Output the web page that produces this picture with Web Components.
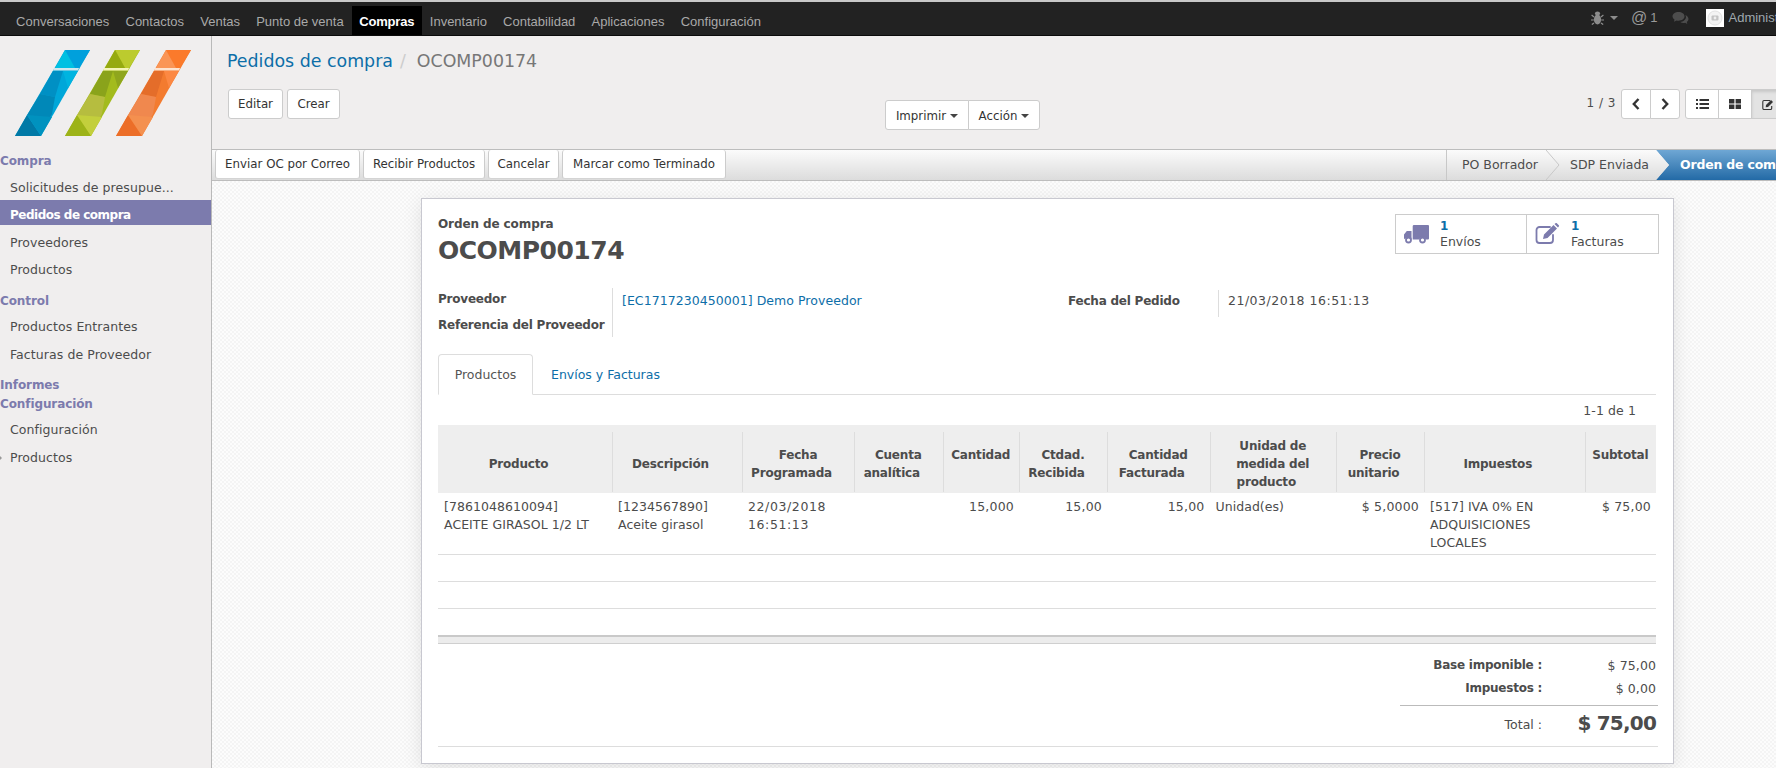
<!DOCTYPE html>
<html lang="es">
<head>
<meta charset="utf-8">
<title>Pedidos de compra</title>
<style>
html,body{margin:0;padding:0;height:768px;overflow:hidden;background:#fff}
body{font-family:"DejaVu Sans","Liberation Sans",sans-serif;font-size:12px;color:#4c4c4c}
</style>
</head>
<body>
<erp-app>
  <erp-topbar slot="top">
    <nav-link>Conversaciones</nav-link><nav-link>Contactos</nav-link><nav-link>Ventas</nav-link><nav-link>Punto de venta</nav-link><nav-link active>Compras</nav-link><nav-link>Inventario</nav-link><nav-link>Contabilidad</nav-link><nav-link>Aplicaciones</nav-link><nav-link>Configuración</nav-link>
  </erp-topbar>
  <erp-sidebar slot="side">
    <side-head style="margin-top:0">Compra</side-head>
    <side-item style="margin-top:7px">Solicitudes de presupue...</side-item>
    <side-item active style="margin-top:2px">Pedidos de compra</side-item>
    <side-item style="margin-top:8px">Proveedores</side-item>
    <side-item style="margin-top:7px">Productos</side-item>
    <side-head style="margin-top:11px">Control</side-head>
    <side-item style="margin-top:6px">Productos Entrantes</side-item>
    <side-item style="margin-top:8px">Facturas de Proveedor</side-item>
    <side-head style="margin-top:10px">Informes</side-head>
    <side-head style="margin-top:-1px">Configuración</side-head>
    <side-item style="margin-top:6px">Configuración</side-item>
    <side-item marker style="margin-top:8px">Productos</side-item>
  </erp-sidebar>
  <control-panel slot="panel"></control-panel>
  <status-bar slot="status"></status-bar>
  <sheet-area slot="main">
    <po-sheet></po-sheet>
  </sheet-area>
</erp-app>

<script>
function def(name, html, init){
  customElements.define(name, class extends HTMLElement{
    constructor(){
      super();
      const r = this.attachShadow({mode:'open'});
      r.innerHTML = html;
      if(init) init(r,this);
    }
  });
}

def('erp-app', `<style>
:host{display:grid;grid-template-columns:212px 1fr;grid-template-rows:36px 113px 32px 587px;width:1776px;height:768px;overflow:hidden}
.t{grid-column:1/3;grid-row:1}
.s{grid-column:1;grid-row:2/5;min-height:0}
.p{grid-column:2;grid-row:2;min-width:0}
.b{grid-column:2;grid-row:3;min-width:0}
.m{grid-column:2;grid-row:4;min-width:0;min-height:0}
</style>
<div class="t"><slot name="top"></slot></div>
<div class="s"><slot name="side"></slot></div>
<div class="p"><slot name="panel"></slot></div>
<div class="b"><slot name="status"></slot></div>
<div class="m"><slot name="main"></slot></div>`);

def('nav-link', `<style>
:host{display:block;flex:none;font:13px/31px "Liberation Sans",Arial,sans-serif;color:#a9a9a9;padding:0 8.1px;height:31px}
:host([active]){background:#000;color:#fff;font-weight:700;padding:0 7.5px;letter-spacing:-.2px}
</style><slot></slot>`);

def('erp-topbar', `<style>
:host{display:flex;height:36px;box-sizing:border-box;background:#222;border-top:2px solid #c9c9c9;border-bottom:1px solid #0b0b0b;overflow:hidden;padding-left:8px;font-family:"Liberation Sans",Arial,sans-serif}
.l{display:flex;align-items:flex-start;padding-top:3.5px;height:31px}
.r{margin-left:auto;display:flex;align-items:center;color:#8c8c8c;font-size:13.5px;width:185px;flex:none;height:33px;margin-top:-1px}
.r svg{flex:none}
.car{width:0;height:0;border:4px solid transparent;border-top-color:#8c8c8c;border-bottom:0;margin:1px 0 0 6px}
.at{font-size:16px;margin-left:13px;color:#999}
.one{margin-left:3px;font-size:13px;color:#999}
.av{width:18px;height:18px;background:#fff;margin-left:17px;flex:none;display:flex;align-items:center;justify-content:center}
.nm{margin-left:4px;color:#9fa8ae;font-size:13px;white-space:nowrap}
</style>
<div class="l"><slot></slot></div>
<div class="r">
<svg width="13" height="14" viewBox="0 0 13 14"><g fill="#8c8c8c"><ellipse cx="6.5" cy="8.5" rx="3.6" ry="5"/><ellipse cx="6.5" cy="2.6" rx="2.6" ry="2"/></g><g stroke="#8c8c8c" stroke-width="1.2" fill="none"><path d="M3 6L.6 4M10 6l2.4-2M2.8 9H0M10.2 9H13M3 12l-2.2 1.6M10 12l2.2 1.6"/></g></svg>
<span class="car"></span>
<span class="at">@</span><span class="one">1</span>
<svg width="17" height="14" viewBox="0 0 17 14" style="margin-left:15px"><path fill="#4d4d4d" d="M6.5 1C3 1 .5 3 .5 5.3c0 1.300.8 2.500 2 3.300L2 10.800l2.600-1.300c.6.100 1.300.200 1.900.200 3.400 0 6-1.900 6-4.400S9.900 1 6.500 1z"/><path fill="#4d4d4d" d="M13.400 4.200c.4.600.6 1.200.6 1.900 0 2.600-2.500 4.600-5.700 5 .9.600 2 .9 3.200.9.600 0 1.100-.1 1.700-.2l2.100 1.200-.5-2c1-.7 1.700-1.700 1.700-2.900 0-1.600-1-3-2.600-3.900z"/></svg>
<span class="av"><svg width="16" height="16" viewBox="0 0 16 16"><circle cx="8" cy="8" r="7" fill="#f3f3f3" stroke="#e2e2e2"/><rect x="4.500" y="5.500" width="7" height="5" rx="1" fill="#c4c4c4"/><circle cx="8" cy="8" r="1.400" fill="#eee"/></svg></span>
<span class="nm">Administrator</span>
</div>`);

function stripe(ox, c){
  return `<g transform="translate(${ox} 50)">
  <polygon points="0,86 26,86 75,0 50,0" fill="${c.base}"/>
  <polygon points="50,0 75,0 64,18 60,18" fill="${c.tr}"/>
  <polygon points="50,0 60,18 40,18" fill="${c.tl}"/>
  <polygon points="38,21 63,21 53,38 48,21" fill="${c.ur}"/>
  <polygon points="38,21 48,21 40,47 25,44" fill="${c.ul}"/>
  <polygon points="25,44 40,47 37,64 30,76 12,65" fill="${c.mid}"/>
  <polygon points="0,86 12,65 26,86" fill="${c.bot}"/>
  <polygon points="12,65 26,86 37,67" fill="${c.mid2}"/>
  <polygon points="39,18 64,18 63,20.500 38,20.500" fill="${c.band}"/>
  </g>`;
}
const LOGO = `<svg width="200" height="115" viewBox="0 36 200 115" style="display:block">`+
 stripe(15,{base:'#00a7d9',tr:'#00a0dc',tl:'#00c0e2',ur:'#00b4e0',ul:'#0090c4',mid:'#0088b8',mid2:'#0092bf',bot:'#0079a6',band:'#cfe6ec'})+
 stripe(65,{base:'#a3bb1d',tr:'#bccb2e',tl:'#96aa10',ur:'#8fa61d',ul:'#8aa31b',mid:'#b6bd3f',mid2:'#c3cf3c',bot:'#9db318',band:'#f4f4b8'})+
 stripe(116,{base:'#f37b2f',tr:'#fb7a2b',tl:'#fa9556',ur:'#fc8843',ul:'#e46d2a',mid:'#f0884e',mid2:'#f4904f',bot:'#ec6e28',band:'#fde3cf'})+
 `</svg>`;

def('erp-sidebar', `<style>
:host{display:block;width:212px;height:732px;box-sizing:border-box;background:#f0eeee;border-right:1px solid #b9b9b9;overflow:hidden}
.logo{height:115px}
</style><div class="logo">${LOGO}</div><slot></slot>`);

def('side-head', `<style>
:host{display:block;height:20px;line-height:20px;font-weight:700;font-size:12px;color:#7c7bad;letter-spacing:-.1px;white-space:nowrap}
</style><slot></slot>`);

def('side-item', `<style>
:host{display:block;height:20px;line-height:20px;padding-left:10px;color:#4c4c4c;font-size:12.500px;letter-spacing:.08px;white-space:nowrap;position:relative}
:host([active]){background:#7c7bad;color:#fff;font-weight:700;font-size:12px;padding-top:5px;letter-spacing:-.5px}
:host([marker])::before{content:"";position:absolute;left:0;top:8px;width:0;height:0;border:2px solid transparent;border-left:2px solid #999}
</style><slot></slot>`);

def('erp-btn', `<style>
:host{display:inline-flex;align-items:center;justify-content:center;box-sizing:border-box;height:var(--h,30px);padding:var(--pt,0) var(--px,10px) 0;background:#fff;border:1px solid #ccc;border-radius:var(--r,3px);color:#333;font-size:11.800px;white-space:nowrap;flex:none}
:host([on]){background:#e3e3e3;box-shadow:inset 0 2px 3px rgba(0,0,0,.12)}
</style><slot></slot>`);

def('caret-mark', `<style>:host{display:inline-block;width:0;height:0;border:4px solid transparent;border-top-color:#444;border-bottom:0;margin-left:4px;vertical-align:middle}</style>`);

def('control-panel', `<style>
:host{display:block;height:113px;box-sizing:border-box;background:#f0eeee;padding:15px 0 0 16px;overflow:hidden}
.bc{font-size:17.400px;line-height:21px;height:21px;white-space:nowrap;margin-left:-1px}
.bc a{color:#0d6ea8}
.bc i{font-style:normal;color:#ccc;margin:0 11px 0 7px}
.bc b{font-weight:400;color:#777}
.row{display:grid;grid-template-columns:657px auto 1fr;margin-top:17px;align-items:start}
.lb{display:flex;gap:4px}
.grp{display:flex;margin-top:11px}
.grp erp-btn{--h:30px;--pt:2px}
.grp erp-btn:first-child{--r:3px 0 0 3px;width:84px;--px:0px}
.grp erp-btn:last-child{--r:0 3px 3px 0;margin-left:-1px;width:72px;--px:0px}
.rb{display:flex;justify-content:flex-end;align-items:flex-start;margin-right:-9px}
.pg{margin:7px 5px 0 0;font-size:12px;letter-spacing:.5px;color:#4c4c4c;white-space:nowrap}
.sq{display:flex}
.sq erp-btn{--px:0px;width:30px;--r:0}
.sq.a erp-btn:first-child{--r:3px 0 0 3px}
.sq.a erp-btn:last-child{--r:0 3px 3px 0;margin-left:-1px}
.sq.b{margin-left:5px}
.sq.b erp-btn{width:34px;margin-left:-1px}
.sq.b erp-btn:first-child{--r:3px 0 0 3px;margin-left:0}
</style>
<div class="bc"><a>Pedidos de compra</a><i>/</i><b>OCOMP00174</b></div>
<div class="row">
  <div class="lb"><erp-btn style="--px:0px;width:55px">Editar</erp-btn><erp-btn style="--px:0px;width:53px">Crear</erp-btn></div>
  <div class="grp"><erp-btn>Imprimir<caret-mark></caret-mark></erp-btn><erp-btn>Acción<caret-mark></caret-mark></erp-btn></div>
  <div class="rb">
    <span class="pg">1 / 3</span>
    <div class="sq a">
      <erp-btn><svg width="8" height="12" viewBox="0 0 8 12"><path d="M6.500 1L1.800 6l4.700 5" fill="none" stroke="#333" stroke-width="2.400"/></svg></erp-btn>
      <erp-btn><svg width="8" height="12" viewBox="0 0 8 12"><path d="M1.500 1l4.700 5-4.700 5" fill="none" stroke="#333" stroke-width="2.400"/></svg></erp-btn>
    </div>
    <div class="sq b">
      <erp-btn><svg width="13" height="10" viewBox="0 0 13 10"><path fill="#333" d="M0 0h2v2H0zM3.500 0H13v2H3.500zM0 4h2v2H0zM3.500 4H13v2H3.500zM0 8h2v2H0zM3.500 8H13v2H3.500z"/></svg></erp-btn>
      <erp-btn><svg width="12" height="10" viewBox="0 0 12 10"><path fill="#333" d="M0 0h5.400v4.400H0zM6.600 0H12v4.400H6.600zM0 5.600h5.400V10H0zM6.600 5.600H12V10H6.600z"/></svg></erp-btn>
      <erp-btn on><svg width="12" height="11" viewBox="0 0 12 11"><path d="M8 1.500H2A1.300 1.300 0 0 0 .8 2.800v6.400A1.300 1.300 0 0 0 2 10.500h6.400a1.300 1.300 0 0 0 1.300-1.300V7" fill="none" stroke="#333" stroke-width="1.100"/><path fill="#333" d="M4 6l5-5 2 2-5 5-2.300.3z"/></svg></erp-btn>
    </div>
  </div>
</div>`);

def('status-bar', `<style>
:host{display:flex;height:32px;box-sizing:border-box;border-top:1px solid #bdbdbd;border-bottom:1px solid #bdbdbd;background:linear-gradient(#fbfbfb,#dcdcdc);padding-left:3px;overflow:hidden;align-items:flex-start}
.acts{display:flex;gap:3px}
.acts erp-btn{--h:29px;--px:0px;border-top:0;border-bottom:1px solid #d4d4d4}
.steps{margin-left:auto;display:flex;height:30px;width:330px;flex:none}
.st{position:relative;box-sizing:border-box;height:30px;line-height:30px;font-size:12.500px;color:#4c4c4c;white-space:nowrap}
.st:first-child{border-left:1px solid #c8c8c8}
.a{position:absolute;top:0;right:-14px;width:14px;height:30px;z-index:2}
.on{background:linear-gradient(#6fa7d4,#236aa6);color:#fff;font-weight:700;overflow:hidden;letter-spacing:-.2px}
</style>
<div class="acts">
<erp-btn style="width:145px">Enviar OC por Correo</erp-btn>
<erp-btn style="width:122px">Recibir Productos</erp-btn>
<erp-btn style="width:71px">Cancelar</erp-btn>
<erp-btn style="width:164px">Marcar como Terminado</erp-btn>
</div>
<div class="steps">
 <div class="st" style="width:100px;padding-left:15px">PO Borrador<svg class="a" viewBox="0 0 14 30"><defs><linearGradient id="g1" x1="0" x2="0" y1="0" y2="1"><stop offset="0" stop-color="#fbfbfb"/><stop offset="1" stop-color="#dcdcdc"/></linearGradient></defs><path d="M0 0L13 15 0 30z" fill="url(#g1)"/><path d="M0 0L13 15 0 30" fill="none" stroke="#c8c8c8"/></svg></div>
 <div class="st" style="width:110px;padding-left:24px">SDP Enviada<svg class="a" viewBox="0 0 14 30"><path d="M0 0L13 15 0 30z" fill="url(#g1)"/></svg></div>
 <div class="st on" style="width:120px;padding-left:24px">Orden de compra<svg style="position:absolute;left:0;top:0" width="14" height="30" viewBox="0 0 14 30"><path d="M0 0L13 15 0 30z" fill="url(#g1)"/></svg></div>
</div>`);

def('sheet-area', `<style>
:host{display:block;height:587px;box-sizing:border-box;padding:17px 0 0 209px;overflow:hidden;background:repeating-conic-gradient(#f4f4f4 0 25%,#fcfcfc 0 50%) 0 0/4px 4px}
</style><slot></slot>`);

def('stat-btn', `<style>
:host{display:flex;width:130px;box-sizing:border-box;height:38px;align-items:center;color:#4c4c4c;font-size:12.500px}
.i{width:44px;flex:none;padding-left:8px;box-sizing:border-box;display:flex}
.t{line-height:16px}
.n{color:#0d6ea8;font-weight:700;font-size:12px;display:block}
</style><div class="i"><slot name="icon"></slot></div><div class="t"><span class="n"><slot name="n"></slot></span><slot></slot></div>`);

def('po-lines', `<style>
:host{display:block}
table{border-collapse:separate;border-spacing:0;table-layout:fixed;width:1218px;font-size:12.500px}
th{height:68px;padding:9px 3px 0;box-sizing:border-box;background:linear-gradient(#ddd,#ddd) 0 7px/1px 60px no-repeat,#eee;font-size:12px;font-weight:700;line-height:18px;letter-spacing:-.2px;color:#4c4c4c;text-align:center;vertical-align:middle}
th:first-child{background:#eee}
th>i{display:inline-block;width:13px}
td{border-bottom:1px solid #ddd;height:27px;box-sizing:border-box;padding:5px 5px 0 6px;line-height:18px;vertical-align:top;color:#4c4c4c;letter-spacing:.05px}
tr.f td{height:62px}
td.n{text-align:right;letter-spacing:.2px}
td.d{letter-spacing:.6px}
tfoot td{border:0;height:26px;padding:0}
tr.thick td{height:9px;border-top:2px solid #c9c9c9;border-bottom:1px solid #cfcfcf;background:#ececec;padding:0}
</style>
<table>
<colgroup><col style="width:174px"><col style="width:130px"><col style="width:112px"><col style="width:88.500px"><col style="width:76.500px"><col style="width:88px"><col style="width:102.500px"><col style="width:126.500px"><col style="width:88px"><col style="width:160.500px"><col style="width:71.500px"></colgroup>
<thead><tr>
<th>Producto<i></i></th><th>Descripción<i></i></th><th>Fecha<br>Programada<i></i></th><th>Cuenta<br>analítica<i></i></th><th>Cantidad<br><i></i></th><th>Ctdad.<br>Recibida<i></i></th><th>Cantidad<br>Facturada<i></i></th><th>Unidad de<br>medida del<br>producto<i></i></th><th>Precio<br>unitario<i></i></th><th>Impuestos<i></i></th><th>Subtotal<br><i></i></th>
</tr></thead>
<tbody>
<tr class="f"><td>[7861048610094]<br>ACEITE GIRASOL 1/2 LT</td><td>[1234567890]<br>Aceite girasol</td><td class="d">22/03/2018<br>16:51:13</td><td></td><td class="n">15,000</td><td class="n">15,00</td><td class="n">15,00</td><td>Unidad(es)</td><td class="n">$ 5,0000</td><td>[517] IVA 0% EN<br>ADQUISICIONES<br>LOCALES</td><td class="n">$ 75,00</td></tr>
<tr><td colspan="11"></td></tr>
<tr><td colspan="11"></td></tr>
</tbody>
<tfoot>
<tr><td colspan="11"></td></tr>
<tr class="thick"><td colspan="11"></td></tr>
</tfoot>
</table>`);

def('po-sheet', `<style>
:host{display:block;width:1253px;height:566px;box-sizing:border-box;background:#fff;border:1px solid #c8c8d0;box-shadow:0 4px 18px rgba(0,0,0,.10);padding:16px 17px 0 16px;font-size:12.500px;color:#4c4c4c}
.hd{display:flex;justify-content:space-between;height:73px}
.ol{font-weight:700;font-size:12px;line-height:18px;letter-spacing:-.1px}
h1{margin:2px 0 0;font-size:25px;line-height:32px;font-weight:700;letter-spacing:-.5px;color:#4c4c4c}
.stats{display:flex;height:40px;box-sizing:border-box;border:1px solid #ccc;margin:-1px -3px 0 0}
.stats stat-btn+stat-btn{border-left:1px solid #ccc}
.flds{display:grid;grid-template-columns:175px 455px 150px 1fr;height:48px}
.lab{font-weight:700;font-size:12px;letter-spacing:-.22px;white-space:nowrap}
.c1{border-right:1px solid #ddd;padding-top:2px;line-height:18px;height:49px;box-sizing:border-box}
.c1 div+div{margin-top:8px}
.v{padding:4px 0 0 9px;color:#0d6ea8;line-height:18px;letter-spacing:.05px}
.c3{padding-top:4px;line-height:18px}
.c4{border-left:1px solid #ddd;height:25px;margin-top:2px;padding:2px 0 0 9px;line-height:18px;letter-spacing:.5px}
.tabs{display:flex;margin-top:18px;height:41px;border-bottom:1px solid #ddd;box-sizing:border-box}
.tab{box-sizing:border-box;height:41px;width:95px;border:1px solid #ddd;border-bottom:1px solid #fff;border-radius:4px 4px 0 0;background:#fff;text-align:center;line-height:40px;color:#555}
.tab2{margin-left:18px;line-height:42px;color:#0d6ea8}
.cnt{height:30px;display:flex;align-items:center;justify-content:flex-end;padding-right:20px;letter-spacing:.1px}
.tot{display:grid;grid-template-columns:142px 114px;width:258px;margin:11px -2px 0 auto;row-gap:2px;line-height:20px;padding-right:2px;box-sizing:border-box}
.tot .k{text-align:right;font-weight:700;font-size:12px;letter-spacing:-.25px}
.tot .val{text-align:right;padding-top:1px;letter-spacing:.1px}
.sep{grid-column:1/3;border-top:1px solid #bbb;margin:4px -2px 0 0;height:0}
.tk{text-align:right;line-height:38px;margin-top:-2px}
.tv{text-align:right;font-size:20px;font-weight:700;line-height:36px;margin-top:-3px;letter-spacing:-.8px}
.end{border-top:1px solid #ddd;margin:2px -2px 0 0}
svg{display:block}
</style>
<div class="hd">
 <div><div class="ol">Orden de compra</div><h1>OCOMP00174</h1></div>
 <div class="stats">
  <stat-btn><svg slot="icon" width="25" height="20" viewBox="0 0 25 20"><path fill="#7c7bad" d="M10 1h14a1 1 0 0 1 1 1v12.500a1 1 0 0 1-1 1h-2.500a3.200 3.200 0 0 0-6.200 0H8.700V2.300A1.300 1.300 0 0 1 10 1zM2.800 7h4.700v8.500H7a3.200 3.200 0 0 0-6-.2A1.200 1.200 0 0 1 0 14v-3.500z"/><circle cx="4.500" cy="16" r="2.500" fill="none" stroke="#7c7bad" stroke-width="1.800"/><circle cx="18.500" cy="16" r="2.500" fill="none" stroke="#7c7bad" stroke-width="1.800"/></svg><span slot="n">1</span>Envíos</stat-btn>
  <stat-btn style="width:132px"><svg slot="icon" width="25" height="22" viewBox="0 0 25 22"><path d="M15 4H4.500A3 3 0 0 0 1.500 7v10a3 3 0 0 0 3 3H15a3 3 0 0 0 3-3v-5" fill="none" stroke="#7c7bad" stroke-width="1.800" stroke-linecap="round"/><path fill="#7c7bad" d="M9 11.500L18.500 2l3.500 3.500-9.500 9.500-4.500 1zM19.500 1l1-.8a1 1 0 0 1 1.300 0l2 2a1 1 0 0 1 0 1.300l-.8 1z"/></svg><span slot="n">1</span>Facturas</stat-btn>
 </div>
</div>
<div class="flds">
 <div class="c1"><div class="lab">Proveedor</div><div class="lab">Referencia del Proveedor</div></div>
 <div class="v">[EC1717230450001] Demo Proveedor</div>
 <div class="c3 lab">Fecha del Pedido</div>
 <div class="c4">21/03/2018 16:51:13</div>
</div>
<div class="tabs"><div class="tab">Productos</div><div class="tab2">Envíos y Facturas</div></div>
<div class="cnt">1-1 de 1</div>
<po-lines></po-lines>
<div class="tot">
 <div class="k">Base imponible :</div><div class="val">$ 75,00</div>
 <div class="k">Impuestos :</div><div class="val">$ 0,00</div>
 <div class="sep"></div>
 <div class="tk">Total :</div><div class="tv">$ 75,00</div>
</div>
<div class="end"></div>`);
</script>
</body>
</html>
